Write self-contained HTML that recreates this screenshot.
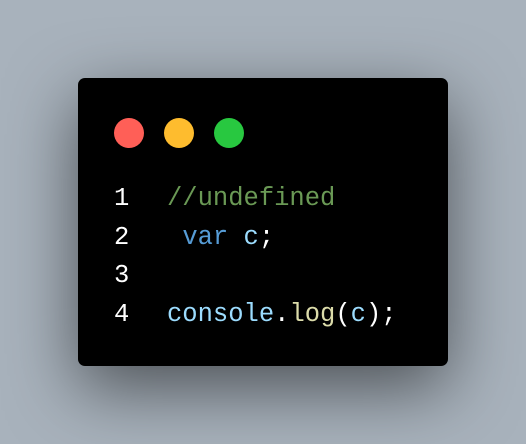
<!DOCTYPE html>
<html><head><meta charset="utf-8"><style>
html,body{margin:0;padding:0}
body{width:526px;height:444px;background:#a8b2bc;position:relative;overflow:hidden}
.card{position:absolute;left:78px;top:78px;width:370px;height:288px;background:#000;border-radius:7px;box-shadow:0 22px 70px rgba(0,0,0,0.55)}
.dot{position:absolute;top:40px;width:30px;height:30px;border-radius:50%}
.code{position:absolute;left:36px;top:102px;font-family:"Liberation Mono",monospace;font-size:25.5px;line-height:38.5px;color:#fff;white-space:pre}
.n{display:inline-block;width:53px}
</style></head><body>
<div class="card">
<div class="dot" style="left:36px;background:#ff5f57"></div>
<div class="dot" style="left:86px;background:#febc2e"></div>
<div class="dot" style="left:136px;background:#28c840"></div>
<div class="code"><div><span class="n">1</span><span style="color:#6a9955">//undefined</span></div><div><span class="n">2</span> <span style="color:#569cd6">var</span> <span style="color:#9cdcfe">c</span>;</div><div><span class="n">3</span></div><div><span class="n">4</span><span style="color:#9cdcfe">console</span>.<span style="color:#dcdcaa">log</span>(<span style="color:#9cdcfe">c</span>);</div></div>
</div>
</body></html>
